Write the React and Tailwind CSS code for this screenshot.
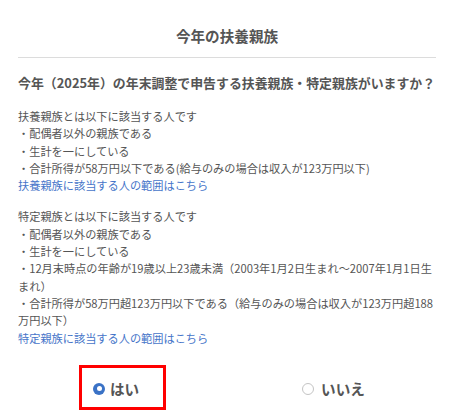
import React from 'react';

const Radio = ({ checked }) =>
    checked ? (
        <span className="w-[12px] h-[12px] rounded-full bg-[#3a72c6] flex items-center justify-center shrink-0">
            <span className="w-[5px] h-[5px] rounded-full bg-white" />
        </span>
    ) : (
        <span className="w-[12px] h-[12px] rounded-full border border-[#c4c4c4] bg-white shrink-0" />
    );

const App = () => {
    return (
        <div className="w-[454px] h-[414px] bg-white text-[#555] px-[18px] overflow-hidden font-['Noto_Sans_CJK_JP',sans-serif]">
            {/* Header */}
            <div className="pt-[25px] pb-[10px] border-b border-[#dcdcdc]">
                <h1 className="text-center text-[14.6px] font-bold leading-[22px]">今年の扶養親族</h1>
            </div>

            <p className="mt-[15px] text-[12.9px] font-bold leading-[20px]">
                今年（2025年）の年末調整で申告する扶養親族・特定親族がいますか？
            </p>

            <div className="mt-[15px] text-[11.2px] leading-[17.3px]">
                <p>扶養親族とは以下に該当する人です</p>
                <p>・配偶者以外の親族である</p>
                <p>・生計を一にしている</p>
                <p>・合計所得が58万円以下である(給与のみの場合は収入が123万円以下)</p>
                <a className="block text-[#4675c9]">扶養親族に該当する人の範囲はこちら</a>
            </div>

            <div className="mt-[14px] text-[11.2px] leading-[17.3px]">
                <p>特定親族とは以下に該当する人です</p>
                <p>・配偶者以外の親族である</p>
                <p>・生計を一にしている</p>
                <p>・12月末時点の年齢が19歳以上23歳未満（2003年1月2日生まれ〜2007年1月1日生まれ）</p>
                <p>・合計所得が58万円超123万円以下である（給与のみの場合は収入が123万円超188万円以下）</p>
                <a className="block text-[#4675c9]">特定親族に該当する人の範囲はこちら</a>
            </div>

            {/* Answer */}
            <div className="mt-[18px] grid grid-cols-2">
                <div className="flex justify-center">
                    <label className="w-[87px] h-[45px] border-[3px] border-[#ff0000] flex items-center gap-[5px] pl-[11px] pt-[3px]">
                        <Radio checked />
                        <span className="text-[14.6px] font-bold leading-none">はい</span>
                    </label>
                </div>
                <div className="flex justify-center">
                    <label className="h-[45px] flex items-center justify-center gap-[7px] pt-[3px] pl-[4px]">
                        <Radio />
                        <span className="text-[14.6px] font-bold leading-none">いいえ</span>
                    </label>
                </div>
            </div>
        </div>
    );
};

export default App;
